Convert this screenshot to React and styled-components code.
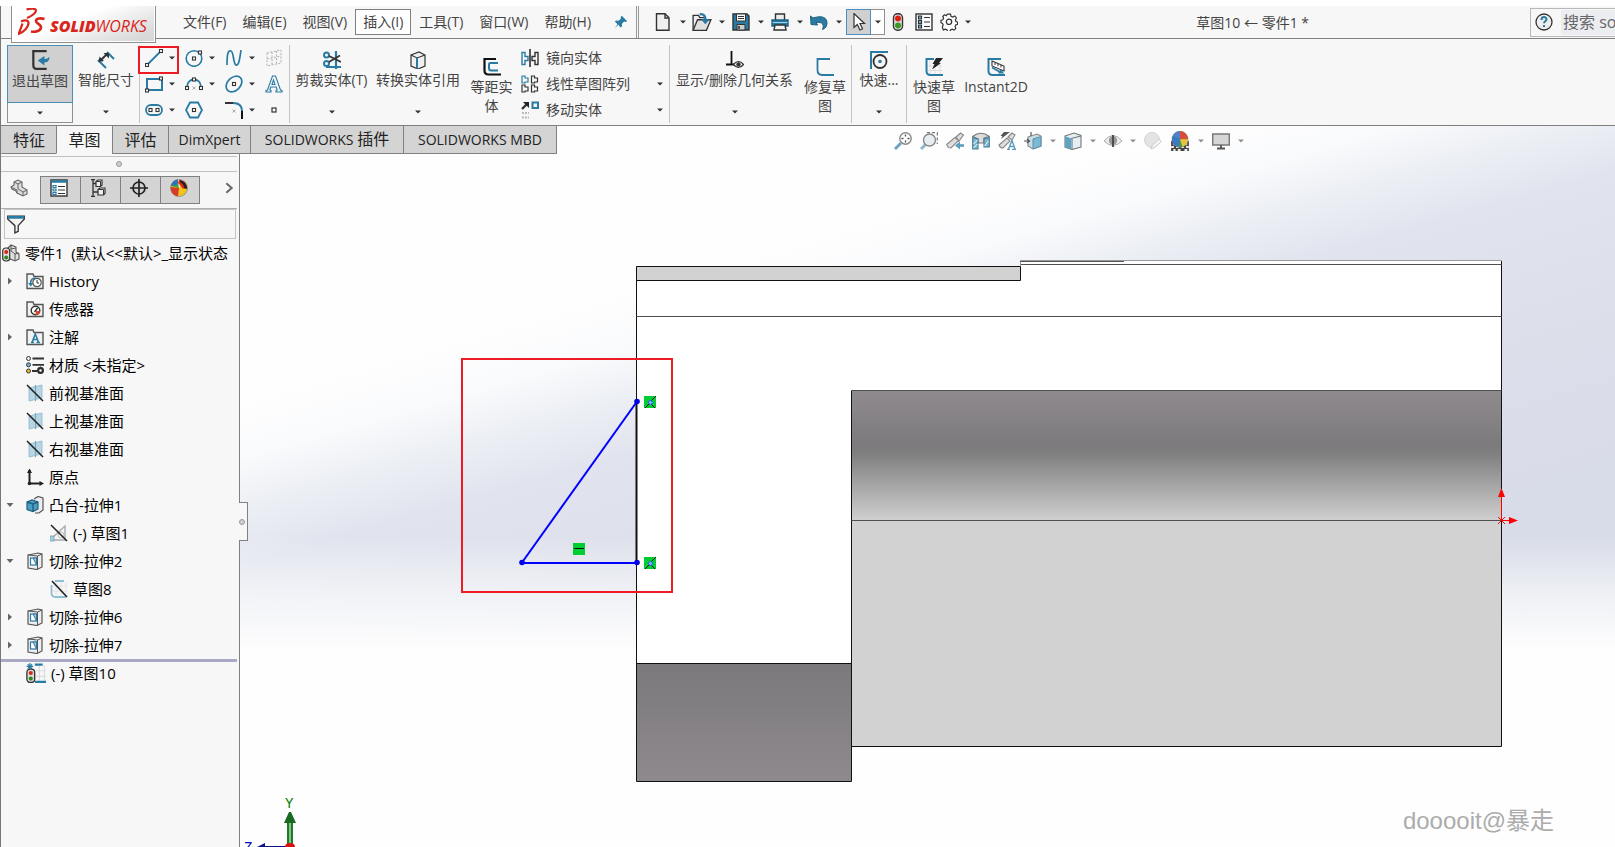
import React from "react";
import styled, { createGlobalStyle, css } from "styled-components";

const BLUE = "#2a7ba3";
const DARK = "#333333";
const SANS = '"Open Sans", "Noto Sans CJK SC", sans-serif';

const GlobalStyle = createGlobalStyle`
  * { box-sizing: border-box; }
  body { margin: 0; background: #fff; font-family: ${SANS}; font-size: 14px; color: #444; }
  button, input { font: inherit; color: inherit; }
  button { background: none; border: 0; padding: 0; cursor: default; }
  svg { display: block; flex: none; }
`;

/* ---------- shell ---------- */

const Shell = styled.div`
  display: flex;
  flex-direction: column;
  min-height: 100vh;
  padding-top: 6px;
  overflow: hidden;
`;
const Frame = styled.div`
  flex: 1;
  display: flex;
  flex-direction: column;
  border-left: 1px solid #777;
`;

/* ---------- title bar ---------- */

const TitleBar = styled.header`
  display: flex;
  align-items: center;
  height: 33px;
  background: #f7f7f7;
  border-bottom: 1px solid #808080;
`;
const Logo = styled.div`
  align-self: flex-start;
  position: relative;
  z-index: 2;
  display: flex;
  align-items: center;
  gap: 4px;
  width: 145px;
  height: 37px;
  margin-left: 10px;
  padding: 0 2px 4px 6px;
  border: 1px solid #909090;
  border-top: 0;
  background: linear-gradient(160deg, #fff 40%, #d8d8d8 90%);
  box-shadow: inset -1px -1px 0 #fff;
`;
const LogoText = styled.span`
  font-size: 16px;
  font-style: italic;
  color: #d9261c;
  line-height: 18px;
  padding-top: 7px;
  b { font-weight: 800; }
`;
const Menu = styled.nav`
  display: flex;
  margin-left: 19px;
`;
const MenuItem = styled.button`
  height: 26px;
  padding: 0 7px;
  line-height: 22px;
  white-space: nowrap;
  border: 1px solid ${(p) => (p.$open ? "#808080" : "transparent")};
  background: ${(p) => (p.$open ? "#fff" : "transparent")};
`;
const PinButton = styled.button`
  margin: 0 8px 0 15px;
`;
const QuickBar = styled.div`
  display: flex;
  align-items: center;
  align-self: stretch;
  padding-left: 14px;
  border-left: 3px double #9a9a9a;
`;
const QuickButton = styled.button`
  display: flex;
  align-items: center;
  justify-content: center;
  width: ${(p) => p.$w || 20}px;
  height: 26px;
  ${(p) => p.$active && css`
    background: #d0d0d0;
    border: 1px solid #4b8fc4;
    margin-left: -2px;
  `}
`;
const CaretButton = styled.button`
  display: flex;
  align-items: center;
  justify-content: center;
  width: ${(p) => p.$w || 19}px;
  height: ${(p) => p.$h || 26}px;
  color: ${(p) => (p.$light ? "#909090" : DARK)};
  ${(p) => p.$boxed && css`
    border: 1px solid #909090;
    border-${p.$boxed}: 0;
    background: ${p.$boxed === "left" ? "#fff" : "#f7f7f7"};
  `}
`;
const DocTitle = styled.h1`
  margin: 0 221px 0 auto;
  font-size: 14px;
  font-weight: 400;
  white-space: nowrap;
`;
const Search = styled.label`
  display: flex;
  align-items: center;
  gap: 8px;
  width: 85px;
  height: 29px;
  padding-left: 4px;
  border: 1px solid #b8b8b8;
  border-right: 0;
`;
const SearchInput = styled.input`
  flex: 1;
  min-width: 0;
  height: 25px;
  padding: 0 0 0 2px;
  border: 0;
  outline: 0;
  background: #ebedf1;
  font-size: 16px;
  &::placeholder { color: #666; opacity: 1; }
`;

/* ---------- ribbon ---------- */

const Ribbon = styled.div`
  display: flex;
  height: 87px;
  padding: 6px 0 2px 6px;
  background: #f7f7f7;
  border-bottom: 1px solid #808080;
`;
const Separator = styled.div`
  width: 1px;
  background: #c4c4c4;
`;
const Tool = styled.div`
  display: flex;
  flex-direction: column;
  width: ${(p) => p.$w}px;
`;
const ToolButton = styled.button`
  display: flex;
  flex-direction: column;
  align-items: center;
  gap: 1px;
  height: ${(p) => (p.$tall ? 78 : 58)}px;
  padding: ${(p) => (p.$tall ? 13 : 6)}px ${(p) => p.$pad || 0}px 0;
  line-height: 19px;
  white-space: ${(p) => (p.$tall ? "normal" : "nowrap")};
  ${(p) => p.$active && css`
    padding-top: 4px;
    background: #d0d0d0;
    border: 1px solid #4b8fb4;
  `}
`;
const SketchGrid = styled.div`
  display: grid;
  grid-template-columns: 40px 40px 40px 29px;
  grid-template-rows: repeat(3, 26px);
`;
const SketchCell = styled.div`
  position: relative;
  display: flex;
  align-items: center;
  padding-left: 5px;
  ${(p) => p.$marked && css`
    &::after {
      content: "";
      position: absolute;
      inset: 1px 1px -3px -2px;
      border: 2px solid #ed1c24;
      pointer-events: none;
    }
  `}
`;
const LineList = styled.div`
  display: grid;
  grid-template-rows: repeat(3, 26px);
  width: 149px;
`;
const LineRow = styled.div`
  display: flex;
  align-items: center;
  justify-content: space-between;
`;
const LineButton = styled.button`
  display: flex;
  align-items: center;
  gap: 7px;
  padding-left: 1px;
  line-height: 20px;
`;

/* ---------- work area ---------- */

const Work = styled.div`
  flex: 1;
  display: flex;
  flex-direction: column;
  background:
    linear-gradient(180deg, rgba(255,255,255,0) 57%, rgba(254,254,254,0.6) 65%, #fefefe 73%),
    linear-gradient(164deg, #fefefe 29%, #f9fafc 34%, #eceff4 38%, #e1e4ee 43%, #dcdfea 55%, #d8dce8 70%);
`;
const TabRow = styled.div`
  display: flex;
  height: 28px;
`;
const Tabs = styled.div`
  display: flex;
  border-right: 1px solid #808080;
`;
const Tab = styled.button`
  width: ${(p) => p.$w}px;
  font-size: ${(p) => (p.$latin ? 14 : 16)}px;
  line-height: 24px;
  color: #222;
  border-left: 1px solid ${(p) => (p.$first ? "transparent" : "#808080")};
  border-bottom: 1px solid ${(p) => (p.$on ? "#f7f7f7" : "#808080")};
  background: ${(p) => (p.$on ? "#f7f7f7" : "#d4d4d4")};
  span { font-size: 16px; }
`;
const ViewBar = styled.div`
  flex: 1;
  display: flex;
  align-items: center;
  justify-content: center;
  padding: 2px 34px 0 0;
`;
const ViewButton = styled.button`
  padding: 0 4px;
`;
const Split = styled.div`
  flex: 1;
  display: flex;
`;

/* ---------- feature manager ---------- */

const Panel = styled.aside`
  position: relative;
  flex: none;
  width: 239px;
  background: #f7f7f7;
  border-right: 1px solid #808080;
`;
const Grip = styled.div`
  display: flex;
  justify-content: center;
  align-items: center;
  height: 16px;
  margin: 2px 2px 4px 0;
  border-top: 1px solid #c0c0c0;
  border-bottom: 1px solid #c0c0c0;
`;
const Dot = styled.i`
  width: 6px;
  height: 6px;
  border-radius: 50%;
  border: 1px solid #999;
  background: #d0d0d0;
`;
const PanelTabs = styled.div`
  display: flex;
  height: 33px;
  margin-right: 2px;
  border-bottom: 1px solid #b0b0b0;
`;
const PanelTab = styled.button`
  display: flex;
  align-items: center;
  justify-content: center;
  width: ${(p) => (p.$on ? 39 : 40)}px;
  height: 28px;
  padding: 0 3px 4px 0;
  ${(p) => !p.$on && css`
    background: #d4d4d4;
    border: 1px solid #808080;
    border-right-width: ${p.$last ? 1 : 0}px;
  `}
`;
const MoreTabs = styled.button`
  margin-left: auto;
  padding: 0 2px 8px 0;
`;
const Filter = styled.label`
  display: flex;
  align-items: center;
  height: 30px;
  margin: 0 3px 0 3px;
  padding-left: 1px;
  border: 1px solid #c4c4c4;
`;
const FilterInput = styled.input`
  flex: 1;
  min-width: 0;
  border: 0;
  outline: 0;
  background: transparent;
`;
const Tree = styled.ul`
  list-style: none;
  margin: 0;
  padding: 0;
`;
const Row = styled.li`
  display: flex;
  align-items: center;
  height: 28px;
  padding-left: ${(p) => p.$level * 24}px;
  white-space: nowrap;
  font-size: 15px;
  color: #000;
  ${(p) => p.$rollback && css`
    margin-right: 2px;
    border-top: 3px solid #a9a9c6;
    padding-bottom: 3px;
  `}
`;
const Expander = styled.button`
  display: flex;
  align-items: center;
  width: 24px;
  height: 28px;
  margin-left: -24px;
  padding-left: 5px;
  color: #666;
`;
const RowLabel = styled.button`
  display: flex;
  align-items: center;
  gap: 5px;
  padding-left: 1px;
  line-height: 24px;
  white-space: pre;
`;
const PanelHandle = styled.button`
  position: absolute;
  z-index: 2;
  left: 100%;
  top: 348px;
  display: flex;
  align-items: center;
  width: 9px;
  height: 39px;
  background: #f7f7f7;
  border: 1px solid #808080;
  border-left: 0;
`;

/* ---------- graphics area ---------- */

const Viewport = styled.main`
  position: relative;
  flex: 1;
  overflow: hidden;
`;
const Scene = styled.svg`
  position: absolute;
  inset: 0;
  width: 100%;
  height: 100%;
`;
const Watermark = styled.div`
  position: absolute;
  right: 61px;
  bottom: 10px;
  font-family: "Liberation Sans", "Noto Sans CJK SC", sans-serif;
  font-size: 24px;
  line-height: 32px;
  color: #acacac;
`;
const Triad = styled.div`
  position: absolute;
  left: 0;
  bottom: 0;
`;
const AxisText = styled.text`
  font-family: "Liberation Mono", monospace;
  font-size: 14px;
`;

/* ---------- icons ---------- */

const Icon = ({ children, size = 18 }) => (
  <svg width={size} height={size} viewBox="0 0 18 18" fill="none" stroke={DARK} strokeWidth="1.4" aria-hidden="true">
    {children}
  </svg>
);
const Caret = () => (
  <svg width="6" height="4" viewBox="0 0 6 4" aria-hidden="true"><path d="M0 0.5h6L3 3.5z" fill="currentColor" /></svg>
);
const Node = ({ x, y }) => <rect x={x - 1.5} y={y - 1.5} width="3" height="3" fill="#fff" stroke={DARK} strokeWidth="1.1" />;

const I = {
  pin: <Icon size={14}><path d="M10 1l7 7-2 1-2-.5-3 3 .5 3-2 1.500-3-3.500L1 17l3.500-5L1 8.500 3 7l3 .5 3-3L8.500 3z" fill={BLUE} stroke="none" /></Icon>,
  newDoc: <Icon><path d="M2.500 .7h8.500l4 4v12.600H2.500z" fill="#f0f0f0" /><path d="M11 1v4h4" /></Icon>,
  open: <Icon size={20}><path d="M1 16V3h5l1 2h5v3" fill="#eee" strokeWidth="1.200" /><path d="M1 16.500L5 7h12l-4 9.500z" fill="#e0e0e0" strokeWidth="1.200" /><path d="M7 2c4-.5 5 2 5 5" stroke={BLUE} strokeWidth="2.200" /><path d="M8 6.500h8L12 11z" fill={BLUE} stroke="none" /></Icon>,
  save: <Icon><path d="M1 1h14l2 2v14H1z" fill={BLUE} /><path d="M4.500 1h9v7h-9z" fill="#fff" strokeWidth="1" /><path d="M6 3.500h6M6 5.500h6" strokeWidth="1" /><path d="M5 11.500h8V17H5z" fill="#ccc" strokeWidth="1" /><path d="M7 13v3" strokeWidth="1.600" /></Icon>,
  print: <Icon><path d="M4.500 7V1h9v6" fill="#eee" /><path d="M1 7h16v6H1z" fill={BLUE} stroke="#1d5f80" /><path d="M4 12h10l1 5H3z" fill="#f5f5f5" /><path d="M1.500 9.500h15" stroke="#9fd0e6" strokeWidth="1" /></Icon>,
  undo: <Icon><path d="M5 4.500c7-2 12 0 12 5.500 0 3-1.500 5.500-4.500 6.500 1.800-4 .5-8-6.500-7l1.500 2.500L1 11.500 .5 3 3 5z" fill={BLUE} stroke="#1d5f80" strokeWidth="1" /></Icon>,
  pointer: <Icon><path d="M4 .5v14l3.300-3 2.700 5.500 2.500-1.200L10 10.500h4.500z" fill="#fff" strokeWidth="1.200" /></Icon>,
  traffic: <Icon><rect x="4.500" y=".8" width="9" height="16.400" rx="4" fill="#ddd" /><circle cx="9" cy="5.500" r="3" fill="#e02010" stroke="none" /><circle cx="9" cy="12.500" r="3" fill="#3a9a22" stroke="none" /></Icon>,
  options: <Icon><rect x="1" y="1" width="16" height="16" fill="#fff" /><path d="M9 4.500h6M9 9h6M9 13.500h6" strokeWidth="1.100" /><path d="M3.500 3h3v3h-3zM3.500 7.500h3v3h-3zM3.500 12h3v3h-3z" fill="#6db7dc" strokeWidth="1.200" /></Icon>,
  gear: <Icon><path d="M7.500 1.200h3l.5 2 1.800.8 2-1 1.600 2-1 1.800.6 1.700 1.600.7v2l-1.900.8-.6 1.600.7 2-1.800 1.500-1.900-.9-1.600.8-.8 1.600h-2l-.8-1.800-1.600-.7-2 .8L2.300 14l.9-1.900-.7-1.600-1.500-.8V7.500l1.800-.7.8-1.600-.8-1.900 1.700-1.500 1.700.9z" fill="#fff" strokeWidth="1.200" /><circle cx="9" cy="8.800" r="2.700" fill="#f7f7f7" strokeWidth="1.200" /></Icon>,
  help: <Icon><circle cx="9" cy="9" r="8" fill="#eee" strokeWidth="1.300" /><path d="M6.500 7c0-4 5-3.500 5-.7 0 2-2.500 1.800-2.500 4M9 12v2" stroke={BLUE} strokeWidth="2" /></Icon>,
  exit: <Icon size={20}><path d="M15 1H3v13q0 3 3 3h9" stroke={DARK} strokeWidth="2" /><path d="M17.500 6c0 3-1 5-4.500 5v3L7 9.500 13 5.500V8c2.500 0 3-.5 4.500-2z" fill={BLUE} stroke="none" /></Icon>,
  dimension: <Icon><path d="M1 9l8 8M10 1l7 7" stroke={BLUE} strokeWidth="2" /><path d="M4 9l6-6" strokeWidth="2" /><path d="M1.500 11l1-5.500L7 10zM6.500 2H12v5.500z" fill={DARK} stroke="none" /></Icon>,
  line: <Icon><path d="M2 16L16 2" stroke={BLUE} strokeWidth="1.800" /><Node x={2} y={16} /><Node x={16} y={2} /></Icon>,
  circle: <Icon><circle cx="9" cy="9.500" r="7.800" stroke={BLUE} strokeWidth="1.600" /><Node x={9} y={9.500} /><Node x={15} y={3.500} /></Icon>,
  spline: <Icon><path d="M2 16C2 5 3 1 6 2s2 13 5 14 4-8 5-15" stroke={BLUE} strokeWidth="1.700" /></Icon>,
  plane: <Icon><path d="M2 4l14-3v13L2 17zM2 10l14-3M7 3v13M11.500 2v13" stroke="#b0b0b0" strokeWidth="1" strokeDasharray="2 1.500" /></Icon>,
  rect: <Icon><rect x="2" y="4" width="15" height="11" stroke={BLUE} strokeWidth="2" /><Node x={2} y={15.500} /><Node x={16} y={3.500} /></Icon>,
  arc: <Icon><path d="M2 12c0-10 14-10 14 0" stroke={BLUE} strokeWidth="1.800" /><Node x={2} y={13} /><Node x={9} y={4.500} /><Node x={16} y={13} /><path d="M7.500 11.500l3 3m0-3l-3 3" stroke="#aaa" strokeWidth="1" /></Icon>,
  ellipse: <Icon><ellipse cx="9" cy="9" rx="9" ry="6.500" transform="rotate(-45 9 9)" stroke={BLUE} strokeWidth="1.700" /><Node x={9} y={9} /></Icon>,
  text: <Icon><path d="M1 17h5v-1.500l-1.200-.5 1-3h5.400l1 3-1.200.5V17H17v-1.500l-1.500-.5L10.500 1h-3L2.500 15 1 15.500zM7 9.500L8.500 5 10 9.500z" stroke={BLUE} strokeWidth="1.100" /></Icon>,
  slot: <Icon><rect x="1" y="4" width="16" height="10" rx="5" stroke={BLUE} strokeWidth="1.800" /><Node x={5.500} y={9} /><Node x={12.500} y={9} /></Icon>,
  polygon: <Icon><path d="M5 1.500h8L17 9l-4 7.500H5L1 9z" stroke={BLUE} strokeWidth="1.800" /><Node x={9} y={9} /></Icon>,
  fillet: <Icon><path d="M0 2h8" strokeWidth="2" /><path d="M8 2q9 0 9 8" stroke={BLUE} strokeWidth="2" /><path d="M17 10v8" stroke="#111" strokeWidth="2" /><path d="M7.500 8.500l3 3m0-3l-3 3" stroke="#aaa" strokeWidth="1" /></Icon>,
  point: <Icon><rect x="7" y="7" width="4" height="4" fill="#fff" strokeWidth="1.200" /></Icon>,
  trim: <Icon><path d="M13 0v18M3 16h15" stroke={BLUE} strokeWidth="2.200" /><circle cx="3.500" cy="4" r="2.500" stroke={BLUE} strokeWidth="2" /><circle cx="3.500" cy="12.500" r="2.500" stroke={BLUE} strokeWidth="2" /><path d="M6 5l12 6M6 11l11-6.500" strokeWidth="1.800" /></Icon>,
  convert: <Icon><path d="M2 4l8-3 6 3v11l-7 3-7-3z" fill="#f0f0f0" strokeWidth="1.200" /><path d="M2 4l6 3 8-3" strokeWidth="1.100" /><path d="M8 7v10.500" stroke={BLUE} strokeWidth="2" /></Icon>,
  offset: <Icon><path d="M13 1H1.500v11.500q0 4 4 4H18" stroke="#111" strokeWidth="2.200" /><path d="M15 5H7q-1 0-1 2v3q0 2.500 2 2.500h7" stroke={BLUE} strokeWidth="2" /></Icon>,
  mirror: <Icon><path d="M9 0v18" stroke="#111" strokeWidth="1.400" /><path d="M1 3.500h3v4h3v4H4v4H1z" stroke={BLUE} /><path d="M17 3.500h-3v4h-3v4h3v4h3z" /></Icon>,
  pattern: <Icon>{[[1, 1, BLUE], [10.500, 1, DARK], [1, 10, DARK], [10.500, 10, DARK]].map(([x, y, c]) => <path key={x + "-" + y} d={`M${x} ${y}h3v2h3v4h-3v1h-3z`} stroke={c} strokeWidth="1.200" />)}</Icon>,
  move: <Icon><path d="M1 8l5-5" strokeWidth="2.400" /><path d="M2 1h6v6z" fill="#222" stroke="none" /><rect x="11.500" y="1.500" width="5.500" height="5.500" stroke={BLUE} strokeWidth="2" /><path d="M1 12h7M1 16.500h7" stroke="#bbb" strokeWidth="2" strokeDasharray="2 1" /></Icon>,
  relations: <Icon><path d="M5.500 0v13M0 13.500h9" stroke="#111" strokeWidth="1.800" /><path d="M7.500 13.500q5-6 10 0q-5 6-10 0z" fill="#fff" strokeWidth="1.200" /><circle cx="12.500" cy="13.500" r="2.200" fill={DARK} stroke="none" /></Icon>,
  repair: <Icon><path d="M14 1H1.500v11q0 5 5 5H18" stroke={BLUE} strokeWidth="1.800" /></Icon>,
  snap: <Icon><path d="M1 18V1h17" stroke={BLUE} strokeWidth="2" /><circle cx="10" cy="10.500" r="6.500" strokeWidth="1.800" /><circle cx="10" cy="10.500" r="1.800" fill={BLUE} stroke="none" /></Icon>,
  rapid: <Icon><path d="M5 3v14M10 3v14M15 5v12M2 8h15M2 12.500h15" stroke="#ddd" strokeWidth="1" /><path d="M9 1H1.500v12q0 4 4 4H18" stroke={BLUE} strokeWidth="2" /><path d="M11 0h7l-4 5h2L7 11.500 9.500 6H7.500z" fill="#222" stroke="none" /></Icon>,
  instant: <Icon><path d="M14 1H1.500v12q0 4 4 4H18" stroke={BLUE} strokeWidth="2" /><path d="M5 3l12 5v5L5 8z" fill="#fff" strokeWidth="1.100" /><path d="M8 4.500V7M11 5.700v2.500M14 7v2.500" strokeWidth="1" /><path d="M5 9.500l9 5" stroke={BLUE} strokeWidth="1.800" /><path d="M11 15.500h6L14 11z" fill={BLUE} stroke="none" /></Icon>,
  zoomFit: <Icon><path d="M1 17l6-6" stroke="#6da3bf" strokeWidth="3" /><circle cx="11.500" cy="6.500" r="5.700" fill="#fff" stroke="#888" /><path d="M11.500 2.500v2M11.500 8.500v2M7.500 6.500h2M13.500 6.500h2" stroke="#555" /></Icon>,
  zoomArea: <Icon><path d="M7 .7h10.300V12" stroke="#777" strokeDasharray="3 2" strokeWidth="1.200" /><path d="M1 17l5-5" stroke="#8db8cd" strokeWidth="3" /><circle cx="9.500" cy="8" r="6" fill="#e6eef2" stroke="#888" /></Icon>,
  prevView: <Icon><path d="M.7 12.500L9 5.500l3.500 3-7.500 7.500q-3.500 0-4.300-3.500zM10 5l4.500-4 3 2-4.500 6z" fill="#ddd" stroke="#888" strokeWidth="1.100" /><path d="M18 13.500h-5" stroke="#5c9dbd" strokeWidth="2.600" /><path d="M14 9.500L9 13.500l5 4z" fill="#5c9dbd" stroke="none" /></Icon>,
  section: <Icon><path d="M.7 4.500q8-6.500 16.600 0L12 6v5H6V7z" fill="#ddd" stroke="#777" strokeWidth="1.100" /><path d="M.7 5.500L6 7v10H.7zM12 7l5.300-1.500V15H12z" fill="#7fb6cf" stroke="#3f7c98" strokeWidth="1.100" /><path d="M1.500 12l4-4M1.500 16l4-4M12.500 14l4-5" stroke="#fff" strokeWidth="1" /></Icon>,
  annotate: <Icon><path d="M1 13l8-7 3 3-7 7q-3 0-4-3zM10 5l4-4 3 2-3 5z" fill="#ddd" stroke="#888" strokeWidth="1.100" /><path d="M6 0h6L3 7l1.500-3H2.500z" fill="#555" stroke="none" /><path d="M9 17.500h3M14 17.500h4M10.500 17L14 8.500l3 8.500M12 14.500h4" stroke="#5c9dbd" strokeWidth="1.400" /></Icon>,
  orient: <Icon><path d="M4 5l9-3 4 2v10l-8 3-5-3z" fill="#c9dde6" stroke="#888" strokeWidth="1.100" /><path d="M9 7l8-2.500V14l-8 3z" fill="#7cb9d4" stroke="#5a90a8" strokeWidth="1" /><path d="M0 9h5M3 7l2.500 2L3 11M7 0v4" stroke="#555" strokeWidth="1.200" /></Icon>,
  display: <Icon><path d="M1 4l9-3 7 2.500V15l-9 2.500L1 15z" fill="#e4eff4" stroke="#777" strokeWidth="1.100" /><path d="M1 4l6 2.500v11L1 15z" fill="#5fa3c2" stroke="none" /><path d="M7 6.500L17 4M8 7v10" stroke="#777" strokeWidth="1.100" /></Icon>,
  eye: <Icon><path d="M0 9q9-11 18 0q-9 9-18 0z" fill="#eee" stroke="#aaa" strokeWidth="1" /><circle cx="9" cy="8.500" r="4.200" fill="#999" stroke="none" /><path d="M9 3v12" stroke="#444" strokeWidth="1.800" /></Icon>,
  appearance: <Icon><circle cx="8" cy="8" r="7.500" fill="#e4e4e4" stroke="#d4d4d4" strokeWidth="1" /><path d="M7 17l1.500-4L15 7l2.500 2.500-7 6z" fill="#f4f4f4" stroke="#ccc" strokeWidth="1" /></Icon>,
  scene: <Icon size={20}><path d="M1 9h16v9H1z" fill="#444" stroke="none" /><path d="M1 14.500h16M3 17h2M7 17h3M13 17h3M3 12h2M13 12h3" stroke="#eee" strokeWidth="1.800" strokeDasharray="2.500 2" /><circle cx="9" cy="7.500" r="7.200" fill="#3f9e48" stroke="#777" strokeWidth=".6" /><path d="M9 7.500L2.500 4.500A7.200 7.200 0 0 1 9 .3z" fill="#5180cf" stroke="none" /><path d="M2.500 4.500L9 7.500l-1 7A7.200 7.200 0 0 1 2.500 4.500z" fill="#3c78c8" stroke="none" /><path d="M9 .3a7.200 7.200 0 0 1 7.200 7.200L9 7.500z" fill="#dd4b39" stroke="none" /><path d="M9 7.500h7.200a7.200 7.200 0 0 1-5 6.700z" fill="#e8c43c" stroke="none" /></Icon>,
  monitor: <Icon><path d="M.7 2h16.600v11H.7z" fill="#d6d6d6" stroke="#777" /><path d="M9 13v3M5 16.500h8" stroke="#555" strokeWidth="1.800" /></Icon>,
  part: <Icon><path d="M1 8l3-2V3l4-2 4 2v5l5 3v4l-4 2-6-3-1-2-4-2z" fill="#ddd" stroke="#666" strokeWidth="1.100" /><path d="M4 3l4 2 4-2M8 5v5l5 3 4-2M13 13v4M1 8l6 3v3" stroke="#666" strokeWidth="1" /></Icon>,
  props: <Icon><rect x="1" y="1" width="16" height="16" fill="#fff" /><path d="M1 2.500h16" stroke={BLUE} strokeWidth="2.500" /><path d="M3 6.500h3v2H3zM3 10h3v2H3zM3 13.500h3v2H3z" stroke={BLUE} strokeWidth="1.200" /><path d="M8 7.500h7M8 11h7M8 14.500h7" strokeWidth="1.200" /></Icon>,
  config: <Icon><path d="M3 0v18M3 4.500h3M3 13h5M1 .700h4M1 17.300h4" strokeWidth="1.300" /><path d="M6 2.500l2-1.500h4v5l-1.500 1.500H6zM8 10.500l2-1.500h5v5.500L13.500 16H8z" fill="#eee" strokeWidth="1.200" /><path d="M6 2.500h4.500V7M8 10.500h5.500V16" strokeWidth="1" /></Icon>,
  target: <Icon><circle cx="9" cy="9" r="6" strokeWidth="1.700" stroke="#222" /><path d="M9 0v18M0 9h18" strokeWidth="1.700" stroke="#222" /></Icon>,
  ball: <Icon><circle cx="9" cy="9" r="8.500" fill="#f0c419" stroke="#888" strokeWidth=".8" /><path d="M9 9L1 7a8.300 8.300 0 0 1 7-6.300z" fill="#3fa347" stroke="none" /><path d="M9 9L1 8c-1 5 3 9 7 9.300z" fill="#d63a2c" stroke="none" /><path d="M8 .7l1 8.300 4-7.500z" fill="#fff" stroke="none" /><path d="M9 .700a8.300 8.300 0 0 1 8 8.500l-4 .5L8 4z" fill="#e2291c" stroke="none" /><path d="M10 1q7 2 7 9l-3-1q0-4-4-6z" fill="#222" stroke="none" /><path d="M1 6.500q2-5.500 7-6L7 6z" fill="#2f6fc0" stroke="none" /></Icon>,
  more: <Icon size={12}><path d="M5 2l8 7-8 7" stroke="#666" strokeWidth="3" /></Icon>,
  filter: <Icon size={20}><path d="M1.500 2h15v2.500L11 10.500v5L8 17v-6.500L1.500 4.500z" fill="#f4f4f4" strokeWidth="1.200" /><path d="M1.500 3h15" stroke={BLUE} strokeWidth="2.500" /></Icon>,
  root: <Icon><path d="M5 5l4-4 5 2v5l3 2v5l-4 2-7-3z" fill="#e0e0e0" stroke="#555" strokeWidth="1.100" /><path d="M9 1v6l4 3v6M13 10l4-1M9 5l5-1" stroke="#555" strokeWidth="1" /><rect x=".7" y="4" width="7" height="13" rx="3" fill="#ddd" strokeWidth="1.200" /><circle cx="4.200" cy="8" r="2" fill="#e02010" stroke="none" /><circle cx="4.200" cy="13.500" r="2" fill="#2f8a1c" stroke="none" /></Icon>,
  history: <Icon><path d="M1 16.500V2h6l1 2.500h9v12z" fill="#f2f2f2" stroke="#555" /><circle cx="11" cy="10.500" r="4.200" fill="#fff" stroke="#555" strokeWidth="1.200" /><path d="M11 8v3h2" strokeWidth="1" /><path d="M4.500 12c0-4 2-6 5-6" stroke={BLUE} strokeWidth="1.600" /><path d="M2 11h5.500l-2.700 3.500z" fill={BLUE} stroke="none" /></Icon>,
  sensor: <Icon><path d="M1 16.500V2h6l1 2.500h9v12z" fill="#f2f2f2" stroke="#555" /><circle cx="9.500" cy="10.500" r="4.300" fill="#fff" strokeWidth="1.400" /><path d="M9.500 15a4.300 4.300 0 0 0 4.500-4h-4z" fill="#e0402a" stroke="none" /><path d="M8.500 12l3-4" strokeWidth="1.400" /></Icon>,
  note: <Icon><path d="M1 16.500V2h6l1 2.500h9v12z" fill="#f2f2f2" stroke="#555" /><path d="M5 14.500h3M10.500 14.500h3.500M6 14.500L9.300 6l3.300 8.500M7.500 11.500h4" stroke={BLUE} strokeWidth="1.600" /></Icon>,
  material: <Icon><circle cx="2.500" cy="2.500" r="2" fill="#eee" strokeWidth="1" /><circle cx="2.500" cy="8.800" r="2" fill="#6db7dc" strokeWidth="1" /><circle cx="2.500" cy="15" r="2" fill="#f0bf20" strokeWidth="1" /><path d="M6.500 2.500H18M6.500 8.800H18M6 15h5" strokeWidth="1.800" /><circle cx="14.500" cy="14.500" r="2.300" fill="#fff" strokeWidth="2.300" stroke="#222" /><path d="M14.500 10.500v8M10.500 14.500h8M12 12l5 5M17 12l-5 5" strokeWidth="1.100" /><circle cx="14.500" cy="14.500" r="1.200" fill="#fff" stroke="none" /></Icon>,
  datum: <Icon><path d="M3 4l13-3v13L3 17z" fill="#b7d6e4" stroke="#8db8cd" strokeWidth=".8" /><path d="M9.500 1v16" stroke="#7da5b8" strokeWidth="1.200" /><path d="M1 1l16 16" stroke="#222" strokeWidth="1.600" /></Icon>,
  origin: <Icon><path d="M3.500 2v13.500H15" stroke="#222" strokeWidth="2" /><path d="M1 5l2.500-4.500L6 5zM13.500 13l4.500 2.500L13.500 18z" fill="#222" stroke="none" /><circle cx="3.500" cy="15.500" r="1.800" fill="#222" stroke="none" /></Icon>,
  boss: <Icon><path d="M8 3l4-2.500L17 2v12l-4 3H9" fill="#eee" strokeWidth="1.200" stroke="#555" /><path d="M1 6l5-2 6 2v7l-5 2.500L1 13.500z" fill="#4c9fc3" stroke="#1d5f80" strokeWidth="1.200" /><path d="M1 6l6 2 5-2M7 8v7.500" stroke="#1d5f80" /></Icon>,
  sketchHidden: <Icon><path d="M2 14L15 2v14H2" stroke="#aaa" /><circle cx="11" cy="11" r="3" stroke="#bbb" strokeWidth="1" /><rect x="0" y="12" width="4" height="5" fill="#a8cfe0" stroke="#6da3bf" strokeWidth=".8" /><path d="M1 1l16 16" stroke="#222" strokeWidth="1.600" /></Icon>,
  cut: <Icon><path d="M2 3l10-2 4 1v13l-5 2.500L2 16z" fill="#eee" stroke="#555" strokeWidth="1.200" /><path d="M2 3l9.500 1L16 2M11.500 4v13" stroke="#555" strokeWidth="1" /><rect x="4.500" y="6" width="6" height="7" fill="#fff" stroke={BLUE} strokeWidth="1.200" /><path d="M7 6h3.500v7z" fill="#9fcbe0" stroke={BLUE} strokeWidth="1" /></Icon>,
  sketch: <Icon><path d="M6 2v13M11 2v13M16 2v13M3 6h14M3 11h14" stroke="#e4e4e4" strokeWidth="1" /><path d="M14 1H5M1.500 5v8q0 4 4 4H16" stroke="#8fbfd2" strokeWidth="1.800" /><path d="M2 1l15 16" stroke="#222" strokeWidth="1.600" /></Icon>,
  sketchActive: <Icon size={20}><path d="M12 2v14M16.500 2v14M9 7h9M9 12h9" stroke="#ddd" strokeWidth="1" /><path d="M8 1.500h7M8 17h10" stroke={BLUE} strokeWidth="2" /><path d="M3.500 0v6M.5 3h6M1.500 1l4 4M5.500 1l-4 4" stroke={BLUE} strokeWidth="1" /><rect x=".8" y="5.500" width="7" height="12" rx="3" fill="#ddd" strokeWidth="1.200" /><circle cx="4.300" cy="9" r="1.900" fill="#d02a1a" stroke="none" /><circle cx="4.300" cy="14" r="1.900" fill="#2f8a1c" stroke="none" /></Icon>,
};

/* ---------- data ---------- */

const MENU = ["文件(F)", "编辑(E)", "视图(V)", "插入(I)", "工具(T)", "窗口(W)", "帮助(H)"];
const QUICK = [["新建", I.newDoc], ["打开", I.open], ["保存", I.save], ["打印", I.print], ["撤消", I.undo]];
const SKETCH = [
  ["直线", I.line, true], ["圆", I.circle, true], ["样条曲线", I.spline, true], ["基准面", I.plane, false],
  ["矩形", I.rect, true], ["圆弧", I.arc, true], ["椭圆", I.ellipse, true], ["文字", I.text, false],
  ["槽口", I.slot, true], ["多边形", I.polygon, false], ["圆角", I.fillet, true], ["点", I.point, false],
];
const LINES = [["镜向实体", I.mirror, false], ["线性草图阵列", I.pattern, true], ["移动实体", I.move, true]];
const VIEW_TOOLS = [
  ["整屏显示全图", I.zoomFit], ["局部放大", I.zoomArea], ["上一视图", I.prevView], ["剖面视图", I.section],
  ["动态注解视图", I.annotate], ["视图定向", I.orient, true], ["显示样式", I.display, true],
  ["隐藏/显示项目", I.eye, true], ["编辑外观", I.appearance], ["应用布景", I.scene, true], ["视图设定", I.monitor, true],
];
const PANEL_TABS = [["特征树", I.part], ["属性", I.props], ["配置", I.config], ["尺寸专家", I.target], ["外观", I.ball]];
const TREE = [
  { t: "零件1  (默认<<默认>_显示状态", i: I.root, l: 0 },
  { t: "History", i: I.history, l: 1, e: "closed" },
  { t: "传感器", i: I.sensor, l: 1 },
  { t: "注解", i: I.note, l: 1, e: "closed" },
  { t: "材质 <未指定>", i: I.material, l: 1 },
  { t: "前视基准面", i: I.datum, l: 1 },
  { t: "上视基准面", i: I.datum, l: 1 },
  { t: "右视基准面", i: I.datum, l: 1 },
  { t: "原点", i: I.origin, l: 1 },
  { t: "凸台-拉伸1", i: I.boss, l: 1, e: "open" },
  { t: "(-) 草图1", i: I.sketchHidden, l: 2 },
  { t: "切除-拉伸2", i: I.cut, l: 1, e: "open" },
  { t: "草图8", i: I.sketch, l: 2 },
  { t: "切除-拉伸6", i: I.cut, l: 1, e: "closed" },
  { t: "切除-拉伸7", i: I.cut, l: 1, e: "closed" },
  { t: "(-) 草图10", i: I.sketchActive, l: 1, r: true },
];

/* ---------- parts ---------- */

function BigTool({ w, icon, label, tall, active, pad }) {
  return (
    <Tool $w={w}>
      <ToolButton $tall={tall} $active={active} $pad={pad}>{icon}<span>{label}</span></ToolButton>
      {!tall && (
        <CaretButton $w={w} $h={active ? 20 : 18} $boxed={active ? "top" : undefined} aria-label={`${label} 选项`}><Caret /></CaretButton>
      )}
    </Tool>
  );
}

function Coincident({ x, y }) {
  return (
    <g transform={`translate(${x} ${y})`}>
      <rect width="12" height="12" fill="#00cc33" />
      <path d="M1 12l5-5 5 5M7 5l5-5" stroke="#111" strokeWidth="1" fill="none" />
      <circle cx="6.500" cy="6.500" r="2" fill="#7fb0ff" stroke="#2a5fe0" />
    </g>
  );
}

function Model() {
  return (
    <Scene viewBox="240 154 1375 693" preserveAspectRatio="xMinYMin meet" role="img" aria-label="零件模型">
      <defs>
        <linearGradient id="bore" x1="0" y1="0" x2="0" y2="1">
          <stop offset="0" stopColor="#8f8a8e" />
          <stop offset=".42" stopColor="#7c7a7d" />
          <stop offset=".48" stopColor="#7f7f7f" />
          <stop offset="1" stopColor="#d0d0d0" />
        </linearGradient>
        <linearGradient id="foot" x1="0" y1="0" x2="0" y2="1">
          <stop offset="0" stopColor="#7b797c" />
          <stop offset="1" stopColor="#8e898d" />
        </linearGradient>
      </defs>
      <path d="M636 266h384v-5h482v260H851v142H636z" fill="#fff" />
      <rect x="636" y="266" width="384" height="14" fill="#d2d2d2" />
      <rect x="851" y="391" width="651" height="130" fill="url(#bore)" />
      <rect x="851" y="521" width="651" height="225" fill="#d2d2d2" />
      <rect x="636" y="663" width="215" height="118" fill="url(#foot)" />
      <g fill="none" stroke="#111" strokeWidth="1">
        <path d="M1020.500 280.500H636.500V266.500h384V280.500M636.500 266.500V781.500H851.500V390.500M636.500 663.500h215M1501.500 261V746.500H851.500" />
        <path d="M636.500 316.500h865M851.500 390.500h650M1020.500 264.500h481M851.500 520.500h650" stroke="#505050" />
        <path d="M1020.500 266v-5.500h481" stroke="#999" />
        <path d="M1020 261.500h104" stroke="#555" />
      </g>
      <path d="M636.500 402v160" stroke="#111" strokeWidth="2" />
      <path d="M637 401.500L522 562.500" stroke="#0000ff" strokeWidth="2" />
      <path d="M522 563h115" stroke="#0000ff" strokeWidth="2" />
      <g fill="#0000e8"><circle cx="637" cy="401.500" r="2.800" /><circle cx="522" cy="562.500" r="2.800" /><circle cx="637" cy="562.500" r="2.800" /></g>
      <Coincident x={644} y={396} />
      <Coincident x={644} y={557} />
      <rect x="573" y="543" width="12" height="12" fill="#00cc33" />
      <path d="M574 548.500h10" stroke="#111" />
      <rect x="462" y="359" width="210" height="233" fill="none" stroke="#ed1c24" strokeWidth="2" />
      <g stroke="#f00" fill="#f00">
        <path d="M1501.500 520.500V496M1501.500 520.500H1510M1498 517l7 7M1505 517l-7 7" fill="none" />
        <path d="M1498 497l3.500-9 3.500 9zM1509 517l9 3.500-9 3.500z" stroke="none" />
      </g>
    </Scene>
  );
}

function AxisTriad() {
  return (
    <Triad>
      <svg width="64" height="56" viewBox="240 791 64 56" role="img" aria-label="坐标轴">
        <AxisText x="285" y="808" fill="#008000">Y</AxisText>
        <AxisText x="244" y="852" fill="#0000c8">Z</AxisText>
        <path d="M257 847l8-4v3h22v2z" fill="#10108a" />
        <rect x="287" y="822" width="6" height="25" fill="#1f7a2a" />
        <rect x="289" y="822" width="2" height="25" fill="#7fc58a" />
        <path d="M284 823l5-11h2l5 11z" fill="#176b20" />
        <path d="M285 847q0-4 5-4t5 4z" fill="#e01010" />
      </svg>
    </Triad>
  );
}

function ExpandMark({ open }) {
  return (
    <svg width="8" height="8" viewBox="0 0 8 8" aria-hidden="true">
      <path d={open ? "M0.500 2h7L4 6z" : "M2 0.500v7l4-3.500z"} fill="currentColor" />
    </svg>
  );
}

export default function App() {
  return (
    <>
      <GlobalStyle />
      <Shell>
        <Frame>
          <TitleBar>
            <Logo>
              <svg width="28" height="28" viewBox="0 0 28 28" fill="none" stroke="#d9261c" strokeWidth="2.200" aria-hidden="true">
                <path d="M8.500 1.500c4-1.200 9-1.200 9.500.8C18.300 4.500 14 8 9 10" />
                <path d="M3 13.500c5-2 8-1 7.500 2C10 19.500 6 24 .5 26c1.500-3 2.800-7 4-10.500" />
                <path d="M26.500 11c-4-1.200-8.500-.6-8.500 2 0 2.500 5.500 3.500 5 6.500-.4 3-5 5-10 4" strokeWidth="2.600" />
              </svg>
              <LogoText><b>SOLID</b>WORKS</LogoText>
            </Logo>
            <Menu>{MENU.map((m) => <MenuItem key={m} $open={m.startsWith("插入")}>{m}</MenuItem>)}</Menu>
            <PinButton aria-label="固定菜单">{I.pin}</PinButton>
            <QuickBar>
              {QUICK.map(([label, icon]) => (
                <React.Fragment key={label}>
                  <QuickButton aria-label={label}>{icon}</QuickButton>
                  <CaretButton aria-label={`${label} 选项`}><Caret /></CaretButton>
                </React.Fragment>
              ))}
              <QuickButton $w={25} $active aria-label="选择">{I.pointer}</QuickButton>
              <CaretButton $w={14} $boxed="left" aria-label="选择 选项"><Caret /></CaretButton>
              <QuickButton $w={26} aria-label="重建模型">{I.traffic}</QuickButton>
              <QuickButton $w={26} aria-label="文件属性">{I.options}</QuickButton>
              <QuickButton $w={24} aria-label="选项">{I.gear}</QuickButton>
              <CaretButton $w={14} aria-label="更多选项"><Caret /></CaretButton>
            </QuickBar>
            <DocTitle>草图10 ← 零件1 *</DocTitle>
            <Search>
              {I.help}
              <SearchInput placeholder="搜索 so" aria-label="搜索帮助" />
            </Search>
          </TitleBar>

          <Ribbon>
            <BigTool w={66} icon={I.exit} label="退出草图" active />
            <BigTool w={66} icon={I.dimension} label="智能尺寸" />
            <Separator />
            <SketchGrid>
              {SKETCH.map(([label, icon, menu], n) => (
                <SketchCell key={label} $marked={n === 0}>
                  <button aria-label={label}>{icon}</button>
                  {menu && <CaretButton $w={19} $h={18} aria-label={`${label} 选项`}><Caret /></CaretButton>}
                </SketchCell>
              ))}
            </SketchGrid>
            <Separator />
            <BigTool w={83} icon={I.trim} label="剪裁实体(T)" />
            <BigTool w={90} icon={I.convert} label="转换实体引用" />
            <BigTool w={57} icon={I.offset} label="等距实体" tall pad={6} />
            <LineList>
              {LINES.map(([label, icon, menu]) => (
                <LineRow key={label}>
                  <LineButton>{icon}{label}</LineButton>
                  {menu && <CaretButton $h={18} aria-label={`${label} 选项`}><Caret /></CaretButton>}
                </LineRow>
              ))}
            </LineList>
            <Separator />
            <BigTool w={129} icon={I.relations} label="显示/删除几何关系" />
            <BigTool w={52} icon={I.repair} label="修复草图" tall pad={4} />
            <Separator />
            <BigTool w={54} icon={I.snap} label="快速..." />
            <Separator />
            <BigTool w={54} icon={I.rapid} label="快速草图" tall pad={4} />
            <BigTool w={70} icon={I.instant} label="Instant2D" tall />
          </Ribbon>

          <Work>
            <TabRow>
              <Tabs role="tablist">
                <Tab role="tab" $w={55} $first>特征</Tab>
                <Tab role="tab" $w={56} $on aria-selected="true">草图</Tab>
                <Tab role="tab" $w={56}>评估</Tab>
                <Tab role="tab" $w={82} $latin>DimXpert</Tab>
                <Tab role="tab" $w={153} $latin>SOLIDWORKS <span>插件</span></Tab>
                <Tab role="tab" $w={153} $latin>SOLIDWORKS MBD</Tab>
              </Tabs>
              <ViewBar>
                {VIEW_TOOLS.map(([label, icon, menu]) => (
                  <React.Fragment key={label}>
                    <ViewButton aria-label={label}>{icon}</ViewButton>
                    {menu && <CaretButton $w={14} $light aria-label={`${label} 选项`}><Caret /></CaretButton>}
                  </React.Fragment>
                ))}
              </ViewBar>
            </TabRow>
            <Split>
              <Panel>
                <Grip><Dot /></Grip>
                <PanelTabs role="tablist">
                  {PANEL_TABS.map(([label, icon], n) => (
                    <PanelTab key={label} role="tab" aria-label={label} $on={n === 0} $last={n === 4}>{icon}</PanelTab>
                  ))}
                  <MoreTabs aria-label="更多">{I.more}</MoreTabs>
                </PanelTabs>
                <Filter>
                  {I.filter}
                  <FilterInput aria-label="过滤特征树" />
                </Filter>
                <Tree>
                  {TREE.map((r) => (
                    <Row key={r.t} $level={r.l} $rollback={r.r}>
                      {r.e && <Expander aria-label={`展开 ${r.t}`}><ExpandMark open={r.e === "open"} /></Expander>}
                      <RowLabel>{r.i}{r.t}</RowLabel>
                    </Row>
                  ))}
                </Tree>
                <PanelHandle aria-label="折叠面板"><Dot /></PanelHandle>
              </Panel>
              <Viewport>
                <Model />
                <AxisTriad />
                <Watermark>dooooit@暴走</Watermark>
              </Viewport>
            </Split>
          </Work>
        </Frame>
      </Shell>
    </>
  );
}
